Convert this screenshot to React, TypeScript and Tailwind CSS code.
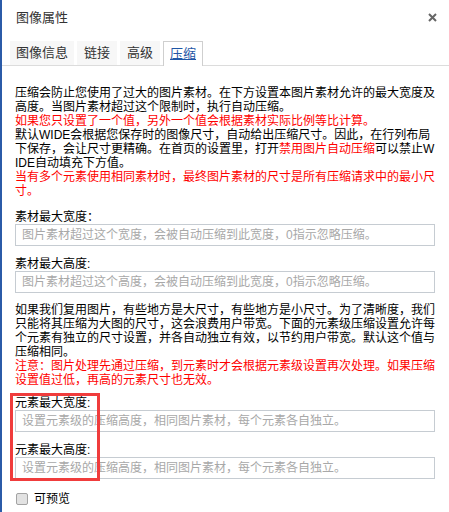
import { useState } from "react"

const tabs = ["图像信息", "链接", "高级", "压缩"]

function Field({ label, placeholder, className = "" }: { label: string; placeholder: string; className?: string }) {
  return (
    <div className={className}>
      <div className="leading-[14px]">{label}</div>
      <input
        placeholder={placeholder}
        className="block w-[420px] h-[22px] border border-[#c6ccd2] px-[6px] text-[12px] outline-none placeholder:text-[#a8a8a8]"
      />
    </div>
  )
}

export default function App() {
  const [active, setActive] = useState(3)
  const [preview, setPreview] = useState(false)

  return (
    <div className="relative w-[449px] h-[512px] overflow-hidden bg-white border-l-2 border-[#2b5ba8] text-black font-['Liberation_Sans','Noto_Sans_CJK_SC',sans-serif]">
      {/* Header */}
      <div className="flex items-center justify-between h-[35px] pl-[14px] pr-[12px]">
        <span className="text-[13px] text-[#333]">图像属性</span>
        <svg width="9" height="9" viewBox="0 0 9 9" className="text-[#666]">
          <path d="M1 1L8 8M8 1L1 8" stroke="currentColor" strokeWidth="2" />
        </svg>
      </div>

      {/* Tabs */}
      <div className="mt-[6px] flex gap-[3px] pl-[8px] border-b border-[#dcdcdc]">
        {tabs.map((t, i) => (
          <button
            key={t}
            onClick={() => setActive(i)}
            className={
              i === active
                ? "h-[25px] -mb-px px-[6px] text-[13px] leading-[22px] bg-white border border-b-0 border-[#cfcfcf] text-[#1f56a6] underline"
                : "h-[24px] px-[6px] text-[13px] leading-[24px] bg-[#f7f7f7] text-[#333]"
            }
            style={{ minWidth: i === 0 ? 64 : 40 }}
          >
            {t}
          </button>
        ))}
      </div>

      {/* Body */}
      <div className="pl-[13px] w-[433px] text-[12px] leading-[14px] break-all">
        <div className="mt-[20px] w-[420px]">
          <div>
            压缩会防止您使用了过大的图片素材。在下方设置本图片素材允许的最大宽度及高度。当图片素材超过这个限制时，执行自动压缩。
          </div>
          <div className="text-[#f00]">如果您只设置了一个值，另外一个值会根据素材实际比例等比计算。</div>
          <div>
            默认WIDE会根据您保存时的图像尺寸，自动给出压缩尺寸。因此，在行列布局下保存，会让尺寸更精确。在首页的设置里，打开
            <span className="text-[#f00]">禁用图片自动压缩</span>可以禁止WIDE自动填充下方值。
          </div>
          <div className="text-[#f00]">
            当有多个元素使用相同素材时，最终图片素材的尺寸是所有压缩请求中的最小尺寸。
          </div>
        </div>

        <Field
          className="mt-[12px]"
          label="素材最大宽度："
          placeholder="图片素材超过这个宽度，会被自动压缩到此宽度，0指示忽略压缩。"
        />
        <Field
          className="mt-[11px]"
          label="素材最大高度:"
          placeholder="图片素材超过这个高度，会被自动压缩到此宽度，0指示忽略压缩。"
        />

        <div className="mt-[10px] w-[420px]">
          <div>
            如果我们复用图片，有些地方是大尺寸，有些地方是小尺寸。为了清晰度，我们只能将其压缩为大图的尺寸，这会浪费用户带宽。下面的元素级压缩设置允许每个元素有独立的尺寸设置，并各自动独立有效，以节约用户带宽。默认这个值与压缩相同。
          </div>
          <div className="text-[#f00]">
            注意：图片处理先通过压缩，到元素时才会根据元素级设置再次处理。如果压缩设置值过低，再高的元素尺寸也无效。
          </div>
        </div>

        <div className="relative mt-[9px]">
          <Field label="元素最大宽度:" placeholder="设置元素级的压缩高度，相同图片素材，每个元素各自独立。" />
          <Field
            className="mt-[11px]"
            label="元素最大高度:"
            placeholder="设置元素级的压缩高度，相同图片素材，每个元素各自独立。"
          />
          {/* annotation box */}
          <div className="absolute -top-[3px] -left-[5px] w-[90px] h-[88px] border-[3px] border-[#f03c3c] pointer-events-none" />
        </div>

        <label className="mt-[13px] flex items-center gap-[6px] pl-[1px] cursor-pointer">
          <span
            onClick={() => setPreview(!preview)}
            className="w-[12px] h-[12px] rounded-[2px] border border-[#a3a3a3] bg-[#e2e2e2] flex items-center justify-center text-[10px] leading-none"
          >
            {preview ? "✓" : ""}
          </span>
          <span className="text-[12px] leading-[14px]">可预览</span>
        </label>
      </div>
    </div>
  )
}
